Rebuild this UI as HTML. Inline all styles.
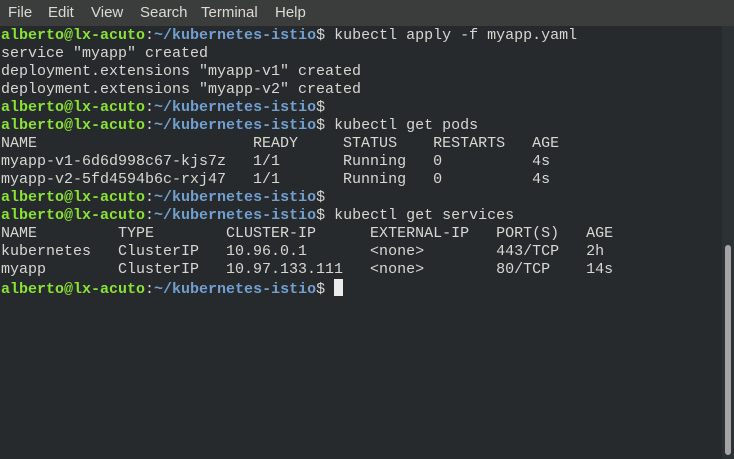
<!DOCTYPE html>
<html><head><meta charset="utf-8"><style>
html,body{margin:0;padding:0;width:734px;height:459px;overflow:hidden;background:#262a2c;}
.menu{position:absolute;left:0;top:0;width:734px;height:26px;background:#3b3c3c;font-family:"Liberation Sans",sans-serif;font-size:15px;color:#dcdad5;}
.menu span{position:absolute;top:4px;}
pre{position:absolute;left:1px;top:27px;margin:0;font-family:"Liberation Mono",monospace;font-size:15px;line-height:18px;color:#d8d8d2;}
.g{color:#8ae234;font-weight:bold}.b{color:#729fcf;font-weight:bold}
.cur{display:inline-block;width:9px;height:17px;background:#ececec;vertical-align:-3px;}
.trough{position:absolute;left:722px;top:26px;width:12px;height:433px;background:#2c3133;}
.thumb{position:absolute;left:725px;top:245px;width:6px;height:210px;background:#a4a4a4;border-radius:3px;}
</style></head><body>
<div class="menu"><span style="left:8px">File</span><span style="left:48px">Edit</span><span style="left:91px">View</span><span style="left:140px">Search</span><span style="left:201px">Terminal</span><span style="left:275px">Help</span></div>
<div class="trough"></div><div class="thumb"></div>
<pre><span class="g">alberto@lx-acuto</span>:<span class="b">~/kubernetes-istio</span>$ kubectl apply -f myapp.yaml
service "myapp" created
deployment.extensions "myapp-v1" created
deployment.extensions "myapp-v2" created
<span class="g">alberto@lx-acuto</span>:<span class="b">~/kubernetes-istio</span>$
<span class="g">alberto@lx-acuto</span>:<span class="b">~/kubernetes-istio</span>$ kubectl get pods
NAME                        READY     STATUS    RESTARTS   AGE
myapp-v1-6d6d998c67-kjs7z   1/1       Running   0          4s
myapp-v2-5fd4594b6c-rxj47   1/1       Running   0          4s
<span class="g">alberto@lx-acuto</span>:<span class="b">~/kubernetes-istio</span>$
<span class="g">alberto@lx-acuto</span>:<span class="b">~/kubernetes-istio</span>$ kubectl get services
NAME         TYPE        CLUSTER-IP      EXTERNAL-IP   PORT(S)   AGE
kubernetes   ClusterIP   10.96.0.1       &lt;none&gt;        443/TCP   2h
myapp        ClusterIP   10.97.133.111   &lt;none&gt;        80/TCP    14s
<span class="g">alberto@lx-acuto</span>:<span class="b">~/kubernetes-istio</span>$ <span class="cur"></span></pre>
</body></html>
